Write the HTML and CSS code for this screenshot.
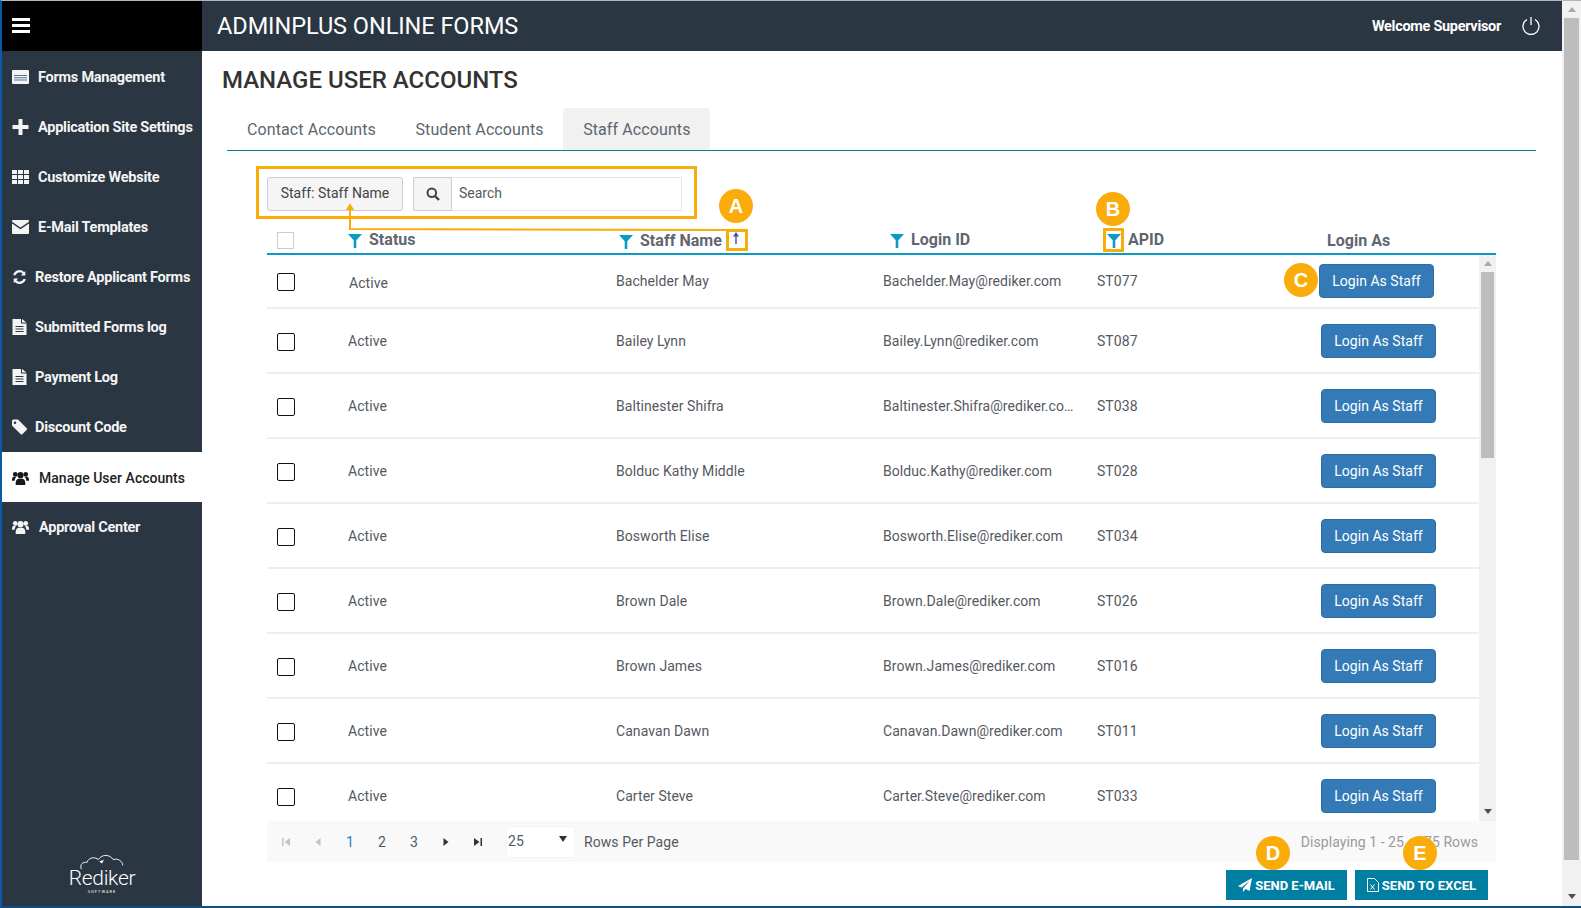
FILE: index.html
```html
<!DOCTYPE html>
<html lang="en">
<head>
<meta charset="utf-8">
<title>Manage User Accounts</title>
<link rel="stylesheet" href="styles.css">
</head>
<body>
<svg class="defs" width="0" height="0" aria-hidden="true">
  <symbol id="i-filter" viewBox="0 0 14 14"><path d="M0 0h14L8.300 6.200V14H5.700V6.200z"/></symbol>
  <symbol id="i-doc" viewBox="0 0 14 16"><path fill-rule="evenodd" d="M0 0h8.500v4.500H14V16H0zM3 7v1h8V7zm0 2.500v1h8v-1zM3 12v1h8v-1z"/><path d="M9.500 0L14 3.500H9.500z"/></symbol>
  <symbol id="i-users" viewBox="0 0 18 16"><circle cx="9" cy="5" r="3.300"/><circle cx="3.400" cy="4" r="2.400"/><circle cx="14.600" cy="4" r="2.400"/><path d="M4 15.500c-.6-4 1-6.500 3-6.700h4c2 .2 3.600 2.700 3 6.700z"/><path d="M0 11c-.2-3 .8-4.700 2.500-4.700h2.700c-1.500 1-2.300 2.600-2.400 4.700zM18 11c.2-3-.8-4.700-2.500-4.700h-2.700c1.500 1 2.300 2.600 2.400 4.700z"/></symbol>
</svg>
<div class="app">
  <aside class="sidebar">
    <div class="burger"><span></span><span></span><span></span></div>
    <nav class="nav">
      <a class="nav-item"><svg class="nav-icon" viewBox="0 0 17 14"><path d="M1 0h15a1 1 0 011 1v12a1 1 0 01-1 1H1a1 1 0 01-1-1V1a1 1 0 011-1z"/><path class="icon-lines" d="M2 5h13v1H2zm0 2.300h13v1H2zm0 2.300h13v1H2z"/></svg><span class="nav-text">Forms Management</span></a>
      <a class="nav-item"><svg class="nav-icon" viewBox="0 0 16 16"><path d="M6 0h4v6h6v4h-6v6H6v-6H0V6h6z"/></svg><span class="nav-text">Application Site Settings</span></a>
      <a class="nav-item"><svg class="nav-icon" viewBox="0 0 17 14"><path d="M0 0h5v4H0zm6 0h5v4H6zm6 0h5v4h-5zM0 5h5v4H0zm6 0h5v4H6zm6 0h5v4h-5zM0 10h5v4H0zm6 0h5v4H6zm6 0h5v4h-5z"/></svg><span class="nav-text">Customize Website</span></a>
      <a class="nav-item"><svg class="nav-icon" viewBox="0 0 17 14"><path d="M1 0h15a1 1 0 011 1v.8L8.500 7.500 0 1.800V1a1 1 0 011-1z"/><path d="M0 3.500l8.500 5.700L17 3.500V13a1 1 0 01-1 1H1a1 1 0 01-1-1z"/></svg><span class="nav-text">E-Mail Templates</span></a>
      <a class="nav-item nav-tight"><svg class="nav-icon" viewBox="0 0 16 16"><path d="M14.200 1.600v4.800H9.400l1.900-1.900A4.500 4.500 0 003.800 6H1.300A6.900 6.900 0 0113 2.800zM1.800 14.400V9.600h4.800l-1.900 1.900a4.500 4.500 0 007.500-1.500h2.500A6.900 6.900 0 013 13.200z"/></svg><span class="nav-text">Restore Applicant Forms</span></a>
      <a class="nav-item nav-tight"><svg class="nav-icon"><use href="#i-doc"/></svg><span class="nav-text">Submitted Forms log</span></a>
      <a class="nav-item nav-tight"><svg class="nav-icon"><use href="#i-doc"/></svg><span class="nav-text">Payment Log</span></a>
      <a class="nav-item nav-tight"><svg class="nav-icon" viewBox="0 0 15 15"><path fill-rule="evenodd" d="M0 1.500A1.500 1.500 0 011.500 0H6l8.500 8.500a1.500 1.500 0 010 2.100L10.600 14.500a1.500 1.500 0 01-2.100 0L0 6zM3 4.500a1.300 1.300 0 100-2.600 1.300 1.300 0 000 2.600z"/></svg><span class="nav-text">Discount Code</span></a>
      <a class="nav-item nav-active"><svg class="nav-icon"><use href="#i-users"/></svg><span class="nav-text">Manage User Accounts</span></a>
      <a class="nav-item nav-wide"><svg class="nav-icon"><use href="#i-users"/></svg><span class="nav-text">Approval Center</span></a>
    </nav>
    <div class="logo">
      <svg class="logo-cloud" viewBox="0 0 50 17"><path d="M3 16C1 11 5 8 9 9 11 3 18 3 21 6 25 0 33 0 37 6 42 4 47 8 47 12" fill="none" stroke="#fff" stroke-width="1"/><path d="M22 8l5-2-2 4z" fill="#fff"/></svg>
      <div class="logo-name">Rediker</div>
      <div class="logo-sub">SOFTWARE</div>
    </div>
  </aside>

  <div class="main">
    <header class="topbar">
      <div class="brand">ADMINPLUS ONLINE FORMS</div>
      <div class="welcome">Welcome Supervisor</div>
      <svg class="power" viewBox="0 0 20 20"><path d="M6 3.500a8 8 0 108 0" fill="none" stroke="#fff" stroke-width="1.300"/><path d="M10 1v8" stroke="#fff" stroke-width="1.300"/></svg>
    </header>

    <div class="content">
      <h1 class="title">MANAGE USER ACCOUNTS</h1>
      <div class="tabs">
        <a class="tab">Contact Accounts</a>
        <a class="tab">Student Accounts</a>
        <a class="tab tab-active">Staff Accounts</a>
      </div>

      <div class="searchbar">
        <button class="field-btn">Staff: Staff Name</button>
        <div class="search">
          <span class="search-addon"><svg viewBox="0 0 14 14" width="14" height="14"><circle cx="5.800" cy="5.800" r="4.300" fill="none" stroke="#444" stroke-width="2"/><path d="M9 9l4 4" stroke="#444" stroke-width="2.400"/></svg></span>
          <span class="search-input">Search</span>
        </div>
      </div>

      <div class="grid">
        <div class="thead">
          <span class="th-check"></span>
          <span class="th"><svg class="funnel"><use href="#i-filter"/></svg>Status</span>
          <span class="th th-low"><svg class="funnel"><use href="#i-filter"/></svg>Staff Name<svg class="sort" viewBox="0 0 8 12" width="8" height="12"><path d="M4 0l3 4.500H4.700V12H3.300V4.500H1z"/></svg></span>
          <span class="th"><svg class="funnel"><use href="#i-filter"/></svg>Login ID</span>
          <span class="th"><svg class="funnel"><use href="#i-filter"/></svg>APID</span>
          <span class="th th-low1">Login As</span>
        </div>
        <div class="tbody">
          <div class="rows">
            <div class="row row-first"><span class="check"></span><span class="c-status">Active</span><span>Bachelder May</span><span class="email">Bachelder.May@rediker.com</span><span>ST077</span><span class="c-action"><button class="login">Login As Staff</button></span></div>
            <div class="row"><span class="check"></span><span class="c-status">Active</span><span>Bailey Lynn</span><span class="email">Bailey.Lynn@rediker.com</span><span>ST087</span><span class="c-action"><button class="login">Login As Staff</button></span></div>
            <div class="row"><span class="check"></span><span class="c-status">Active</span><span>Baltinester Shifra</span><span class="email">Baltinester.Shifra@rediker.com</span><span>ST038</span><span class="c-action"><button class="login">Login As Staff</button></span></div>
            <div class="row"><span class="check"></span><span class="c-status">Active</span><span>Bolduc Kathy Middle</span><span class="email">Bolduc.Kathy@rediker.com</span><span>ST028</span><span class="c-action"><button class="login">Login As Staff</button></span></div>
            <div class="row"><span class="check"></span><span class="c-status">Active</span><span>Bosworth Elise</span><span class="email">Bosworth.Elise@rediker.com</span><span>ST034</span><span class="c-action"><button class="login">Login As Staff</button></span></div>
            <div class="row"><span class="check"></span><span class="c-status">Active</span><span>Brown Dale</span><span class="email">Brown.Dale@rediker.com</span><span>ST026</span><span class="c-action"><button class="login">Login As Staff</button></span></div>
            <div class="row"><span class="check"></span><span class="c-status">Active</span><span>Brown James</span><span class="email">Brown.James@rediker.com</span><span>ST016</span><span class="c-action"><button class="login">Login As Staff</button></span></div>
            <div class="row"><span class="check"></span><span class="c-status">Active</span><span>Canavan Dawn</span><span class="email">Canavan.Dawn@rediker.com</span><span>ST011</span><span class="c-action"><button class="login">Login As Staff</button></span></div>
            <div class="row"><span class="check"></span><span class="c-status">Active</span><span>Carter Steve</span><span class="email">Carter.Steve@rediker.com</span><span>ST033</span><span class="c-action"><button class="login">Login As Staff</button></span></div>
          </div>
          <div class="vscroll inner">
            <span class="arrow-up"></span>
            <div class="track"><div class="thumb"></div></div>
            <span class="arrow-down"></span>
          </div>
        </div>
        <div class="pager">
          <svg class="pg pg-off" viewBox="0 0 8 8"><path d="M0 0h1.500v8H0zM8 0v8L2.500 4z"/></svg>
          <svg class="pg pg-off" viewBox="0 0 8 8"><path d="M6.500 0v8L1.500 4z"/></svg>
          <span class="pg-num pg-cur">1</span>
          <span class="pg-num">2</span>
          <span class="pg-num">3</span>
          <svg class="pg" viewBox="0 0 8 8"><path d="M1.500 0v8l5-4z"/></svg>
          <svg class="pg" viewBox="0 0 8 8"><path d="M0 0v8l5.500-4zM6.500 0H8v8H6.500z"/></svg>
          <div class="per-page">25<span class="caret"></span></div>
          <span class="per-label">Rows Per Page</span>
          <span class="pg-info">Displaying 1 - 25 of 75 Rows</span>
        </div>
      </div>

      <div class="actions">
        <button class="act"><svg viewBox="0 0 14 14" width="14" height="14"><path fill="#fff" d="M14 0L11.500 13 7.500 11 5 14V10.500L12 2.500 3.500 9.500 0 8z"/></svg>SEND E-MAIL</button>
        <button class="act"><svg viewBox="0 0 12 14" width="12" height="14"><path fill="none" stroke="#fff" d="M.5.500h7l4 4v9H.5z"/><path fill="none" stroke="#fff" d="M3.500 6.500l4 5m0-5l-4 5"/></svg>SEND TO EXCEL</button>
      </div>
    </div>
  </div>

  <div class="vscroll outer">
    <span class="arrow-up"></span>
    <div class="track"><div class="thumb"></div></div>
    <span class="arrow-down"></span>
  </div>
</div>

<!-- call-outs laid over the screenshot -->
<div class="callout-frame frame-search"></div>
<div class="callout-frame frame-sort"></div>
<div class="callout-frame frame-filter"></div>
<svg class="connector" viewBox="0 0 390 30" width="390" height="30"><path d="M381 27L4 26V6" fill="none" stroke="#f9ac0a" stroke-width="2"/><path d="M4 0l4 7H0z" fill="#f9ac0a"/></svg>
<span class="badge badge-a">A</span>
<span class="badge badge-b">B</span>
<span class="badge badge-c">C</span>
<span class="badge badge-d">D</span>
<span class="badge badge-e">E</span>
</body>
</html>
```
FILE: styles.css
```css
* { box-sizing: border-box; }
html, body { margin: 0; height: 100%; overflow: hidden; background: #fff; }
body { font-family: Roboto, "Liberation Sans", sans-serif; color: #55595f; font-size: 14px; }
.defs { position: absolute; }
button { font-family: inherit; cursor: pointer; }

.app { display: flex; height: 908px; border-top: 1px solid #b5b5b5; border-bottom: 2px solid #0f4f7f; border-left: 2px solid #0a5aa8; }

/* sidebar */
.sidebar { width: 200px; flex: none; background: #2a3642; display: flex; flex-direction: column; }
.burger { height: 50px; background: #000; display: flex; flex-direction: column; justify-content: center; gap: 3px; padding: 0 0 2px 10px; }
.burger span { display: block; width: 18px; height: 3px; background: #fff; }
.nav { display: flex; flex-direction: column; margin-top: 1px; }
.nav-item { height: 50px; display: flex; align-items: center; gap: 9px; padding: 0 0 0 10px; color: #f4f4f4; font-weight: 700; font-size: 14.500px; letter-spacing: -.25px; }
.nav-tight { gap: 8px; }
.nav-tight .nav-icon { width: 15px; }
.nav-wide { gap: 10px; }
.nav-icon { width: 17px; height: 16px; fill: #f4f4f4; flex: none; }
.icon-lines { fill: #5b7287; }
.nav-active { background: #fff; color: #222; font-weight: 500; letter-spacing: .02px; font-size: 14px; padding-top: 2px; gap: 10px; }
.nav-active .nav-icon { fill: #15191e; }
.logo { margin-top: auto; padding-bottom: 12px; display: flex; flex-direction: column; align-items: center; color: #fff; }
.logo-cloud { width: 48px; height: 16px; margin-bottom: -2px; }
.logo-name { font-size: 21px; font-weight: 300; line-height: 21px; letter-spacing: -.3px; }
.logo-sub { font-size: 4px; letter-spacing: 1px; line-height: 5px; }

/* main */
.main { flex: 1; min-width: 0; display: flex; flex-direction: column; }
.topbar { height: 50px; flex: none; background: #2a3642; color: #fff; display: flex; align-items: center; padding: 0 21px 0 15px; }
.brand { font-size: 23.500px; font-weight: 400; letter-spacing: -.05px; flex: 1; padding-bottom: 1px; }
.welcome { font-size: 14.500px; font-weight: 700; letter-spacing: -.3px; margin-right: 20px; }
.power { width: 20px; height: 20px; }
.content { flex: 1; padding: 0 26px 0 20px; display: flex; flex-direction: column; }
.title { margin: 15px 0 14px; font-size: 24px; line-height: 28px; font-weight: 500; color: #333; letter-spacing: 0; }
.tabs { display: flex; height: 43px; margin-left: 5px; padding-left: 0; border-bottom: 1px solid #0a7f9f; }
.tab { height: 42px; padding: 0 19.750px 0 20px; display: flex; align-items: center; font-size: 16px; color: #5d6670; font-weight: 400; letter-spacing: .1px; }
.tab + .tab { padding-left: 19.750px; }
.tab-active { background: #f1f1f1; border-radius: 4px 4px 0 0; }

.searchbar { display: flex; gap: 10px; margin: 26px 0 0 45px; height: 34px; }
.field-btn { width: 136px; height: 34px; background: #f5f5f5; border: 1px solid #ccc; border-radius: 3px; color: #444; font-size: 14px; letter-spacing: .03px; padding: 0 0 2px; }
.search { display: flex; width: 269px; height: 34px; border: 1px solid #e5e5e5; border-left: 0; }
.search-addon { width: 39px; display: flex; align-items: center; justify-content: center; background: #f5f5f5; border: 1px solid #ccc; border-radius: 3px 0 0 3px; margin: -1px 0; }
.search-input { padding-left: 7px; line-height: 30px; color: #55595f; }

/* grid */
.grid { margin: 10px 0 0 45px; width: 1229px; }
.thead { display: grid; grid-template-columns: 81px 271px 271px 217px 220px 1fr; height: 34px; padding-top: 4px; border-bottom: 2px solid #0a9ac6; align-items: center; }
.th-check { width: 17px; height: 17px; margin: 2px 0 0 10px; border: 1px solid #ccc; background: #fff; }
.th { display: flex; align-items: center; font-size: 16px; font-weight: 700; color: #5f6670; letter-spacing: .02px; }
.th-low { padding-top: 3px; }
.th-low1 { padding-top: 2px; }
.funnel { width: 14px; height: 14px; fill: #0a9ac6; margin-right: 7px; margin-top: 3px; flex: none; }
.sort { fill: #3b4cc0; margin: -6px 0 0 10px; flex: none; }

.tbody { display: flex; height: 566px; }
.rows { flex: 1; min-width: 0; overflow: hidden; }
.row { display: grid; grid-template-columns: 81px 268px 267px 214px 1fr 160px; height: 65px; align-items: center; border-bottom: 2px solid #eee; color: #55595f; letter-spacing: .06px; }
.row-first { height: 54px; }
.row-first .check { margin-top: 2px; }
.row-first .c-status { padding: 3px 0 0 1px; }
.row-first .c-action { padding-right: 45px; }
.check { width: 18px; height: 18px; margin: 2px 0 0 10px; border: 1.500px solid #111; border-radius: 2px; background: #fff; }
.email { padding-right: 22px; white-space: nowrap; overflow: hidden; text-overflow: ellipsis; }
.c-action { display: flex; justify-content: flex-end; padding-right: 43px; }
.login { width: 115px; height: 34px; background: #337ab7; color: #fff; border: 1px solid #2e6da4; border-radius: 4px; font-size: 14px; letter-spacing: .03px; padding: 0; }

.vscroll { flex: none; width: 17px; background: #f1f1f1; display: flex; flex-direction: column; align-items: center; }
.vscroll.outer { width: 19px; }
.track { flex: 1; width: 100%; padding: 0 2px; }
.thumb { background: #bdbdbd; width: 100%; }
.inner .thumb { height: 186px; }
.outer .thumb { height: 842px; }
.arrow-up, .arrow-down { flex: none; width: 0; display: block; border-left: 4px solid transparent; border-right: 4px solid transparent; }
.arrow-up { height: 11px; border-top: 6px solid transparent; border-bottom: 5px solid #a9a9a9; margin-bottom: 6px; }
.arrow-down { height: 5px; border-top: 5px solid #505050; margin-bottom: 7px; }

.pager { height: 41px; background: #f9f9f9; display: flex; align-items: center; padding-left: 15px; color: #55595f; letter-spacing: .06px; }
.pg { width: 8px; height: 8px; fill: #333; margin-right: 24px; flex: none; }
.pg-off { fill: #c4c4c4; }
.pg-num { width: 8px; margin-right: 24px; text-align: center; }
.pg-cur { color: #337ab7; }
.per-page { width: 69px; height: 32px; background: #fff; line-height: 28px; padding: 0 7px 0 1px; display: flex; align-items: flex-start; justify-content: space-between; border: 1px solid #f5f5f5; }
.caret { margin-top: 9px; border-left: 4px solid transparent; border-right: 4px solid transparent; border-top: 6px solid #333; }
.per-label { margin-left: 9px; }
.pg-info { margin-left: auto; padding-right: 18px; color: #9a9a9a; }

.actions { display: flex; justify-content: flex-end; gap: 8px; margin-top: 8px; padding-right: 48px; }
.act { height: 30px; display: flex; align-items: center; gap: 3px; background: #007fa3; border: 0; padding: 0 12px; color: #fff; font-size: 13px; font-weight: 700; }

/* call-outs */
.callout-frame { position: absolute; border: 3px solid #f9ac0a; }
.frame-search { left: 256px; top: 166px; width: 441px; height: 53px; }
.frame-sort { left: 726px; top: 229px; width: 22px; height: 22px; }
.frame-filter { left: 1103px; top: 228px; width: 21px; height: 24px; }
.connector { position: absolute; left: 346px; top: 203px; }
.badge { position: absolute; width: 34px; height: 34px; border-radius: 50%; background: #f9ac0a; color: #fff; font-family: "Liberation Sans", sans-serif; font-weight: 700; font-size: 20px; display: flex; align-items: center; justify-content: center; }
.badge-a { left: 719px; top: 189px; }
.badge-b { left: 1096px; top: 192px; }
.badge-c { left: 1284px; top: 263px; }
.badge-d { left: 1256px; top: 836px; }
.badge-e { left: 1403px; top: 836px; }
```
